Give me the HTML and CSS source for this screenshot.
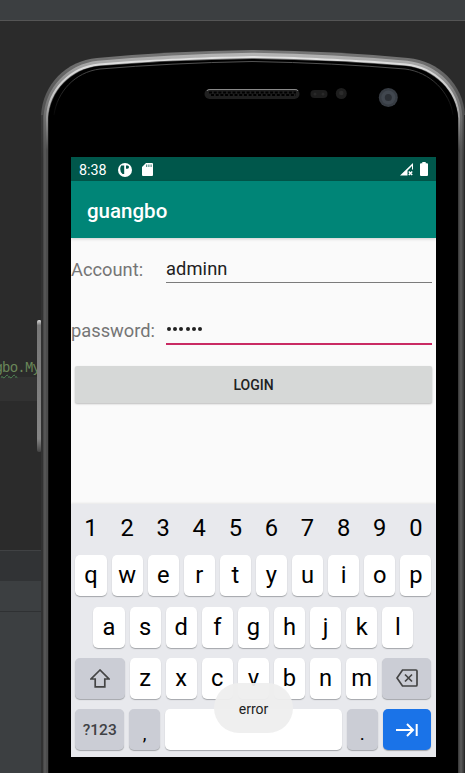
FILE: index.html
```html
<!DOCTYPE html>
<html lang="en">
<head>
<meta charset="utf-8">
<title>guangbo</title>
<link rel="stylesheet" href="styles.css">
</head>
<body>
<div class="desktop">
  <div class="ide">
    <div class="ide-toolbar"></div>
    <div class="ide-editor">
      <div class="code-line"><span class="typo">gbo</span>.My</div>
      <div class="current-line"></div>
    </div>
    <div class="ide-tabs"></div>
    <div class="ide-header"></div>
    <div class="ide-panel"></div>
  </div>

  <div class="phone">
    <svg class="shell" width="465" height="773" viewBox="0 0 465 773">
      <defs>
        <linearGradient id="rim" x1="0" y1="50" x2="0" y2="160" gradientUnits="userSpaceOnUse">
          <stop offset="0" stop-color="#777"/><stop offset=".35" stop-color="#5c5c5c"/><stop offset="1" stop-color="#3c3c3c"/>
        </linearGradient>
        <linearGradient id="mid" x1="0" y1="54" x2="0" y2="150" gradientUnits="userSpaceOnUse">
          <stop offset="0" stop-color="#b4b4b4"/><stop offset=".4" stop-color="#808080"/><stop offset="1" stop-color="#555"/>
        </linearGradient>
        <linearGradient id="shine" x1="0" y1="54" x2="0" y2="150" gradientUnits="userSpaceOnUse">
          <stop offset="0" stop-color="#e4e4e4"/><stop offset=".45" stop-color="#c4c4c4"/><stop offset="1" stop-color="#4c4c4c"/>
        </linearGradient>
        <linearGradient id="fade" x1="0" y1="60" x2="0" y2="120" gradientUnits="userSpaceOnUse">
          <stop offset="0" stop-color="#555"/><stop offset=".5" stop-color="#2a2a2a"/><stop offset="1" stop-color="#000"/>
        </linearGradient>
        <linearGradient id="side" x1="0" y1="320" x2="0" y2="452" gradientUnits="userSpaceOnUse">
          <stop offset="0" stop-color="#ddd"/><stop offset=".04" stop-color="#777"/><stop offset=".9" stop-color="#858585"/><stop offset="1" stop-color="#444"/>
        </linearGradient>
      </defs>
      <rect x="37" y="320" width="4.500" height="132" rx="2" fill="url(#side)"/>
      <path d="M41 780V115C43 84 66 61 97 58Q170 51 252 50Q335 51 408 58C439 61 463 84 465 115V780Z" fill="url(#rim)"/>
      <path d="M45.300 780V117C47 89 68 66 98 62.500Q170 56 252 54.500Q335 56 407 62.500C437 66 459 89 460.700 117V780" fill="none" stroke="url(#mid)" stroke-width="3.500"/>
      <path d="M47 780V117.500C48.500 90 70 67.500 99 64.500Q170 58.500 252 57Q335 58.500 406 64.500C435 67.500 457.500 90 459 117.500V780" fill="none" stroke="url(#shine)" stroke-width="2"/>
      <path d="M48.300 780V118C50 91 71 69 99 66Q170 60.200 252 59Q335 60.200 406 66C434 69 456.500 91 458.200 118V780Z" fill="#000"/>
      <path d="M54 115C57 92 75 72 100 69Q170 63 252 61.500Q335 63 405 69C430 72 450 92 453 115" fill="none" stroke="url(#fade)"/>
      <path d="M42 115V773M464.500 115V773" stroke="#292929"/>
      <rect x="204.500" y="89" width="95" height="10" rx="5" fill="#202020"/>
      <path d="M207 91Q207 89.500 210 89.500H295Q298 89.500 298 91" fill="none" stroke="#888"/>
      <path d="M209 92.500H296" stroke="#000" stroke-width="2" stroke-dasharray="3 1.700"/>
      <path d="M211 95H296" stroke="#000" stroke-width="2" stroke-dasharray="3 1.700"/>
      <rect x="310.500" y="90" width="17" height="8" rx="4" fill="#1d1d1d"/>
      <circle cx="315" cy="94" r="1.500" fill="#292929"/><circle cx="323" cy="94" r="1.500" fill="#292929"/>
      <circle cx="341.300" cy="93.500" r="5.500" fill="#1e1e1e"/><circle cx="341.300" cy="93" r="2.300" fill="#2b2b2b"/>
      <circle cx="388.300" cy="97.500" r="9.500" fill="#373c43"/><circle cx="388.300" cy="97.500" r="7" fill="#41474f"/><circle cx="388.300" cy="97.500" r="3.500" fill="#2b2f35"/>
    </svg>

    <div class="screen">
      <div class="status">
        <span class="clock">8:38</span>
        <svg class="app-icon" width="14" height="14" viewBox="0 0 14 14"><circle cx="7" cy="7" r="7" fill="#fff"/><path d="M3.200 2.500H6.200V11H4.500Q2.200 9 2.200 6Q2.200 4 3.200 2.500ZM8 2.500H9.500Q11 2.500 11 4T9.500 5.700H8Z" fill="#00574b"/></svg>
        <svg class="sd-icon" width="11" height="13" viewBox="0 0 11 13"><path d="M4 0H10Q11 0 11 1V12Q11 13 10 13H1Q0 13 0 12V4Z" fill="#fff"/><path d="M4.700 1.500V4M6.900 1.500V4M9.100 1.500V4" stroke="#00574b" stroke-width=".8"/></svg>
        <span class="grow"></span>
        <svg class="signal" width="14" height="13" viewBox="0 0 14 13"><path d="M0 12.500L13 0V6.500H12V3L7.500 7.500V12.500Z" fill="#fff"/><path d="M8.800 8.500L12.200 12M12.200 8.500L8.800 12" stroke="#fff" stroke-width="1.500"/></svg>
        <svg class="battery" width="8" height="14" viewBox="0 0 8 14"><path d="M2.300 0H5.700V1.300H7Q8 1.300 8 2.300V13Q8 14 7 14H1Q0 14 0 13V2.300Q0 1.300 1 1.300H2.300Z" fill="#fff"/></svg>
      </div>
      <header class="app-bar">guangbo</header>
      <main class="form">
        <div class="field account"><label>Account:</label><div class="input">adminn</div></div>
        <div class="field password"><label>password:</label><div class="input focused"><span class="dots"><i></i><i></i><i></i><i></i><i></i><i></i></span></div></div>
        <button class="login">LOGIN</button>
      </main>
      <div class="keyboard">
        <div class="row numbers"><span>1</span><span>2</span><span>3</span><span>4</span><span>5</span><span>6</span><span>7</span><span>8</span><span>9</span><span>0</span></div>
        <div class="row"><b>q</b><b>w</b><b>e</b><b>r</b><b>t</b><b>y</b><b>u</b><b>i</b><b>o</b><b>p</b></div>
        <div class="row"><b>a</b><b>s</b><b>d</b><b>f</b><b>g</b><b>h</b><b>j</b><b>k</b><b>l</b></div>
        <div class="row">
          <b class="wide"><svg width="20" height="19" viewBox="0 0 20 19"><path d="M10 1L1 10H5.200V17.800H14.800V10H19Z" fill="none" stroke="#444" stroke-width="1.700"/></svg></b>
          <b>z</b><b>x</b><b>c</b><b>v</b><b>b</b><b>n</b><b>m</b>
          <b class="wide"><svg width="22" height="18" viewBox="0 0 22 18"><path d="M6.500 1H20Q21 1 21 2V16Q21 17 20 17H6.500L1 9Z" fill="none" stroke="#444" stroke-width="1.700"/><path d="M9 5.500L16 12.500M16 5.500L9 12.500" stroke="#444" stroke-width="1.700"/></svg></b>
        </div>
        <div class="row">
          <b class="wide symbols">?123</b><b class="mark">,</b><b class="space"></b><b class="mark">.</b>
          <b class="wide enter"><svg width="22" height="14" viewBox="0 0 22 14"><path d="M0 7H17M11 1L17 7L11 13M20.700 1V13" fill="none" stroke="#fff" stroke-width="2"/></svg></b>
        </div>
      </div>
      <div class="toast">error</div>
    </div>
  </div>
</div>
</body>
</html>
```
FILE: styles.css
```css
* { box-sizing: border-box; }
body { margin: 0; background: #2b2b2b; font-family: Roboto, "Liberation Sans", sans-serif; }
.desktop { position: relative; width: 465px; height: 773px; overflow: hidden; }

.ide { display: flex; flex-direction: column; height: 773px; }
.ide-toolbar { height: 21px; background: #3c3f41; border-bottom: 1px solid #555; }
.ide-editor { height: 529px; background: #2b2b2b; padding-top: 339px; }
.code-line { height: 17px; font: 14px/17px "Liberation Mono", monospace; color: #6a8759; margin-left: -5.500px; letter-spacing: -.8px; white-space: nowrap; }
.typo { text-decoration: underline wavy #4f8a55 1px; text-underline-offset: 2px; }
.current-line { height: 24px; background: #323232; }
.ide-tabs { height: 31px; background: #313335; border-top: 1px solid #404244; }
.ide-header { height: 31px; background: #3c3f41; border-bottom: 1px solid #2f3133; }
.ide-panel { flex: 1; background: #3c3f41; }

.phone { position: absolute; inset: 0; padding: 157px 29px 0 71px; }
.shell { position: absolute; left: 0; top: 0; }
.screen { position: relative; width: 365px; height: 600px; background: #fafafa; display: flex; flex-direction: column; overflow: hidden; }

.status { height: 24px; flex: none; background: #00574b; color: #fff; display: flex; align-items: center; padding: 1px 8px 0; }
.clock { font-size: 14.3px; line-height: 24px; width: 39px; padding-top: 1px; }
.app-icon { margin-right: 10px; }
.grow { flex: 1; }
.signal { margin-right: 6px; }
.battery { margin-top: -1px; }
.app-bar { height: 57px; flex: none; background: #008577; color: #fff; font-size: 20.5px; font-weight: 500; line-height: 60px; padding-left: 16px; box-shadow: 0 1px 3px rgba(0,0,0,.18); }

.form { flex: 1; display: flex; flex-direction: column; }
.field { display: flex; color: #757575; font-size: 18.3px; line-height: 22px; }
.field label { width: 95px; white-space: nowrap; padding-top: 1px; }
.account { margin-top: 20px; height: 61px; }
.password { height: 47px; }
.input { width: 266px; height: 25px; border-bottom: 1px solid #7b7b7b; color: #212121; letter-spacing: .1px; }
.focused { height: 26px; border-bottom: 2px solid #c92a63; }
.dots { display: flex; gap: 2.200px; padding: 8px 0 0 1px; }
.dots i { width: 4px; height: 4px; border-radius: 50%; background: #212121; }
.login { width: 357px; height: 37px; margin-left: 4px; border: 0; border-radius: 2px; background: #d6d8d7; color: #212121; font: 500 14px Roboto, sans-serif; padding: 1px 0 0; box-shadow: 0 1px 2px rgba(0,0,0,.25); }

.keyboard { height: 253px; flex: none; background: #e8e9ed; padding: 0 4.600px 0 4.400px; display: flex; flex-direction: column; gap: 9.300px; box-shadow: 0 -1px 2px rgba(0,0,0,.08); }
.row { height: 42px; display: flex; justify-content: center; gap: 5px; font-size: 23.700px; line-height: 41px; color: #000; text-align: center; }
.row span { width: 31.100px; }
.numbers { line-height: 49px; }
.row b { width: 31.100px; height: 41px; border-radius: 5px; background: #fff; font-weight: 400; box-shadow: 0 1px 1px #a4a6aa; }
.row .wide { flex: 1; background: #cbcdd5; display: flex; align-items: center; justify-content: center; }
.row .symbols { font-size: 15.500px; color: #3f4145; font-weight: 500; padding-top: 1px; }
.row .mark { background: #cbcdd5; font-size: 19px; line-height: 49px; }
.row .space { width: 176.500px; }
.row .enter { background: #1a73e8; }

.toast { position: absolute; left: 143px; top: 526px; width: 79px; height: 50px; border-radius: 25px; background: rgba(238,238,238,.95); color: #222; font-size: 14px; line-height: 52px; text-align: center; }
```
